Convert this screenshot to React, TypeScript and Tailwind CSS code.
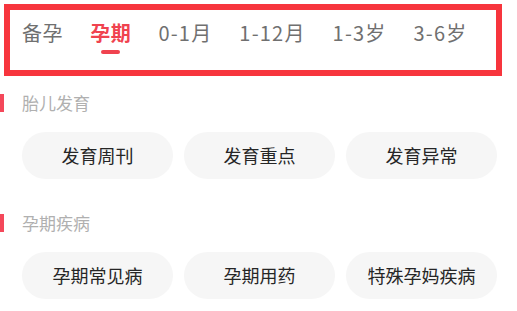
import React from 'react';

const TABS = ['备孕', '孕期', '0-1月', '1-12月', '1-3岁', '3-6岁'];
const ACTIVE = 1;

const SECTIONS = [
  { title: '胎儿发育', items: ['发育周刊', '发育重点', '发育异常'] },
  { title: '孕期疾病', items: ['孕期常见病', '孕期用药', '特殊孕妈疾病'] },
];

const font = { fontFamily: '"Noto Sans CJK SC", "Noto Sans", sans-serif' };

export default function App() {
  return (
    <div className="w-[517px] h-[311px] bg-white overflow-hidden" style={font}>
      {/* 顶部年龄段标签 */}
      <div className="ml-[4px] mt-[4px] w-[498px] h-[72px] border-[6px] border-[#f7353d]">
        <div className="flex items-start gap-[27px] pl-[12px] pt-[9px]">
          {TABS.map((t, i) => (
            <div key={t} className="flex flex-col items-center">
              <span
                className={
                  i === ACTIVE
                    ? 'text-[20px] leading-[28px] tracking-[0.6px] font-bold text-[#f0434f]'
                    : /\d/.test(t)
                      ? 'text-[20px] leading-[28px] tracking-[1.2px] text-[#707070]'
                      : 'text-[20px] leading-[28px] tracking-[0.6px] text-[#707070]'
                }
              >
                {t}
              </span>
              {i === ACTIVE && <div className="mt-[3px] w-[19px] h-[4px] rounded-full bg-[#f0434f]" />}
            </div>
          ))}
        </div>
      </div>

      {/* 分类 */}
      <div className="pt-[17px]">
        {SECTIONS.map((s, idx) => (
          <div key={s.title} className={idx > 0 ? 'mt-[34px]' : ''}>
            <div className="flex items-center h-[20px]">
              <div className="w-[4px] h-[18px] bg-[#f4485a]" />
              <span className="ml-[18px] text-[17px] leading-[20px] text-[#b0b0b0]">{s.title}</span>
            </div>
            <div className="flex gap-[11px] pl-[22px] mt-[19px]">
              {s.items.map((it) => (
                <div
                  key={it}
                  className="w-[151px] h-[47px] rounded-full bg-[#f6f6f6] flex items-center justify-center text-[18px] font-normal text-[#262626]"
                >
                  {it}
                </div>
              ))}
            </div>
          </div>
        ))}
      </div>
    </div>
  );
}
